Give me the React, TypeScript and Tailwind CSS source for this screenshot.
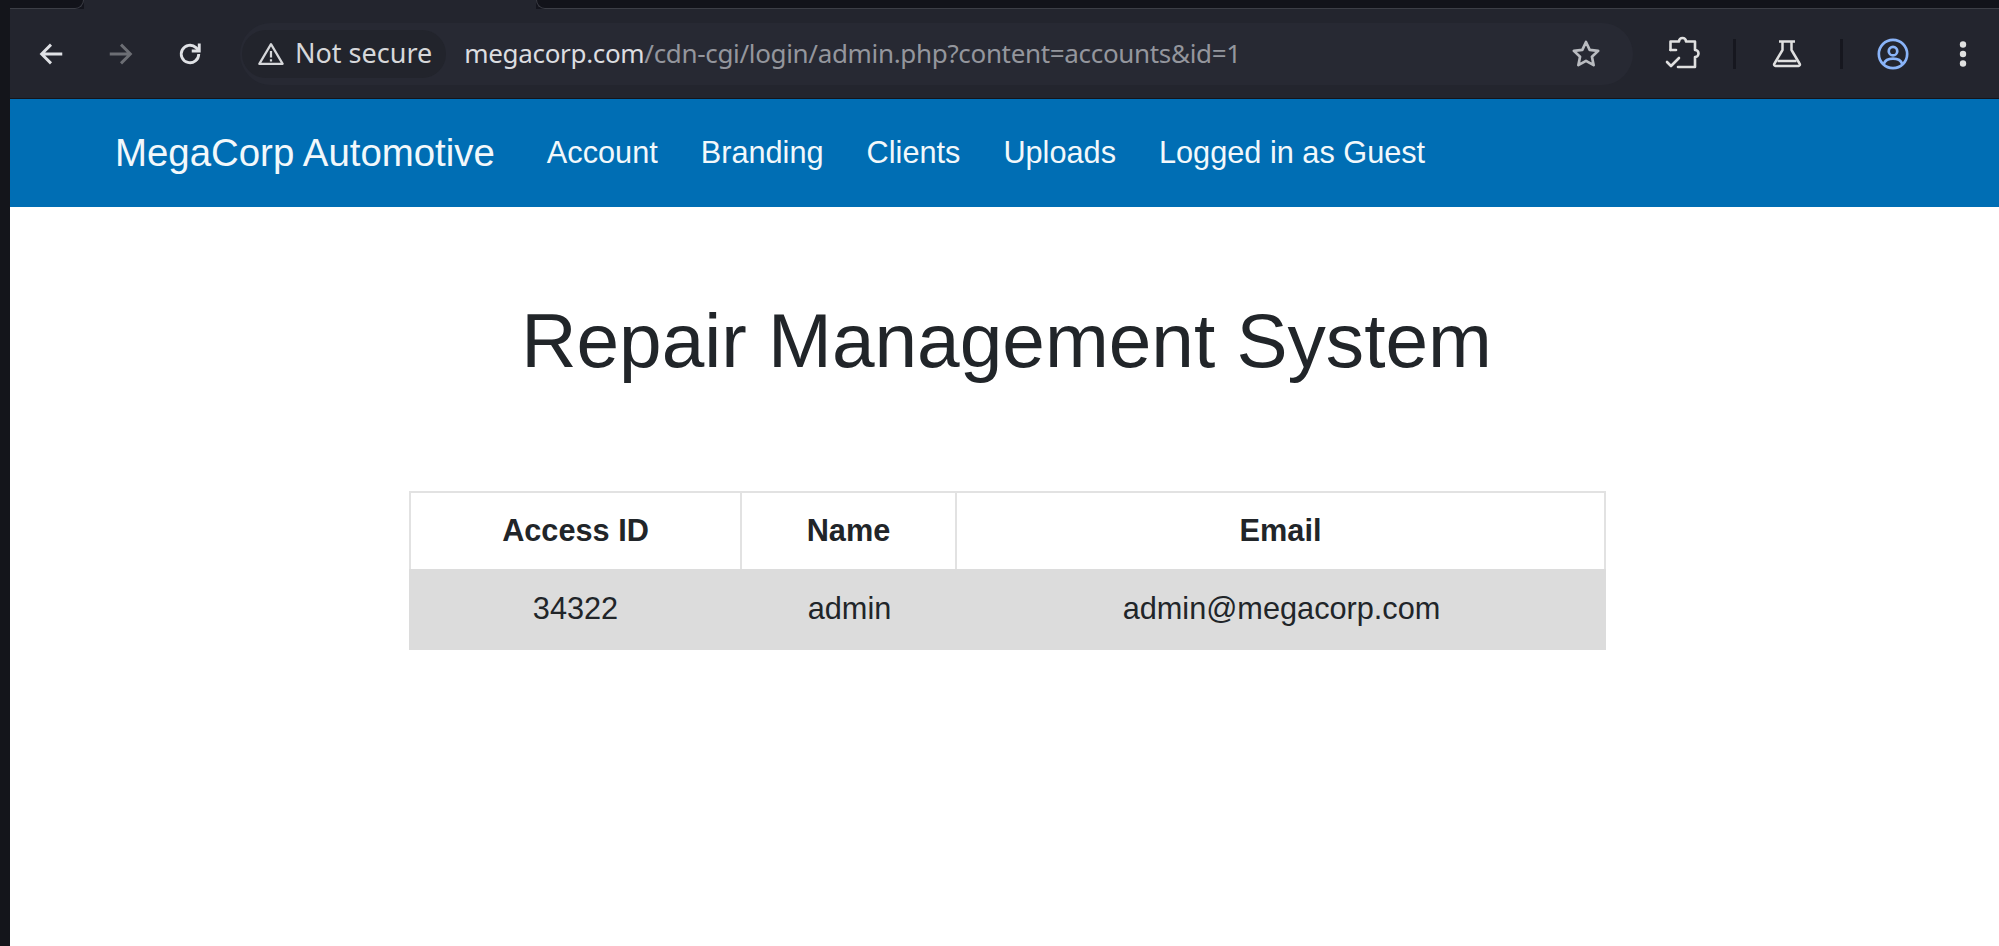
import React from "react";

const Back = ({ c = "#dfe1e5" }: { c?: string }) => (
  <svg width="30" height="30" viewBox="0 0 24 24" fill="none" stroke={c} strokeWidth="2.3">
    <path d="M21 12H4.5M12 4.5L4.5 12l7.5 7.5" />
  </svg>
);

export default function App() {
  return (
    <div className="h-[946px] w-[1999px] overflow-hidden flex bg-[#16171f] font-['Liberation_Sans',sans-serif]">
      <div className="w-[10px] shrink-0 bg-[#14151b]" />
      <div className="flex-1 flex flex-col min-w-0">
        <div className="relative h-[9px] bg-[#14151d]">
          <div className="absolute left-0 top-0 h-[9px] w-[74px] rounded-br-[10px] border-b border-r border-[#3c3e46] bg-[#12131a]" />
          <div className="absolute left-[74px] top-0 h-[9px] w-[452px] bg-[#23252e]" />
          <div className="absolute left-[526px] top-0 h-[9px] w-[1463px] rounded-bl-[10px] border-b border-l border-[#3c3e46] bg-[#12131a]" />
        </div>
        <div className="h-[89px] bg-[#23252e] flex items-center pl-[26px] text-[#d6d7da]">
          <Back />
          <div className="ml-[40px] w-[30px] h-[30px] -scale-x-100"><Back c="#6c6e74" /></div>
          <svg className="ml-[39px]" width="30" height="30" viewBox="0 0 24 24" fill="none" stroke="#dfe1e5" strokeWidth="2.3">
            <path d="M19 12a7 7 0 1 1-2.200-5.100L19 9" />
            <path d="M19.400 3.600V9.600H13.400" />
          </svg>
          <div className="ml-[35px] w-[1393px] h-[62px] rounded-full bg-[#272933] flex items-center pr-[30px] shrink-0">
            <div className="h-[48px] ml-[2px] pl-[15px] pr-[14px] rounded-full bg-[#22242c] flex items-center gap-[10px]">
              <svg width="28" height="28" viewBox="0 0 24 24" fill="none" stroke="#d6d7da" strokeWidth="1.9">
                <path d="M12 3.500L22 20.500H2Z" strokeLinejoin="round" />
                <path d="M12 9.500v5.500M12 16.500v2" />
              </svg>
              <span className="text-[27px] font-['Noto_Sans',sans-serif] whitespace-nowrap">Not secure</span>
            </div>
            <div className="ml-[18px] flex-1 text-[26px] font-['Noto_Sans',sans-serif] tracking-[-0.33px] whitespace-nowrap">
              <span className="text-[#dcdde0]">megacorp.com</span>
              <span className="text-[#94969d]">/cdn-cgi/login/admin.php?content=accounts&amp;id=1</span>
            </div>
            <svg width="34" height="34" viewBox="0 0 24 24" fill="none" stroke="#b9bbc0" strokeWidth="1.9" strokeLinejoin="round">
              <path d="M12 3.500l2.600 5.600 6 .7-4.400 4.100 1.200 6-5.400-3-5.400 3 1.200-6-4.400-4.100 6-.7Z" />
            </svg>
          </div>
          <svg className="ml-[30px]" width="40" height="40" viewBox="0 0 40 40" fill="none" stroke="#e0e0e0" strokeWidth="2.600" strokeLinejoin="round" strokeLinecap="round">
            <path d="M7.500 16V7.500H16a3.500 3.500 0 0 1 7 0H32V16a3.500 3.500 0 0 1 0 7V33H15" />
            <path d="M7.500 16H13" />
            <path d="M4 28l4 4 8-8" />
          </svg>
          <div className="ml-[30px] w-[3px] h-[30px] bg-[#16171f]" />
          <svg className="ml-[36px]" width="30" height="30" viewBox="0 0 30 30" fill="none" stroke="#e0e0e0" strokeWidth="2.500" strokeLinejoin="round">
            <path d="M7 2.500H23M10.500 2.500V11L2.500 24.500a1.500 1.500 0 0 0 1.300 2.500H26.200a1.500 1.500 0 0 0 1.300-2.500L19.500 11V2.500" />
            <path d="M5.500 22H24.500" />
          </svg>
          <div className="ml-[38px] w-[3px] h-[30px] bg-[#16171f]" />
          <svg className="ml-[33px]" width="34" height="34" viewBox="0 0 24 24" fill="none" stroke="#8ab4f8" strokeWidth="1.9">
            <circle cx="12" cy="12" r="10" />
            <circle cx="12" cy="10" r="3" />
            <path d="M5.500 19c1-3 3.500-3.800 6.500-3.800s5.500.8 6.500 3.800" />
          </svg>
          <svg className="ml-[48px]" width="10" height="30" viewBox="0 0 10 30" fill="#e0e0e0">
            <circle cx="5" cy="5.500" r="3.200" />
            <circle cx="5" cy="15" r="3.200" />
            <circle cx="5" cy="24.500" r="3.200" />
          </svg>
        </div>
        <div className="h-px bg-[#14151b]" />
        <nav className="h-[108px] bg-[#006eb4] flex items-center pl-[105px] text-[#f2f8fb]">
          <span className="text-[38.4px] whitespace-nowrap">MegaCorp Automotive</span>
          <div className="ml-[52px] flex gap-[43px] text-[30.7px] whitespace-nowrap">
            <span>Account</span>
            <span>Branding</span>
            <span>Clients</span>
            <span>Uploads</span>
            <span>Logged in as Guest</span>
          </div>
        </nav>
        <main className="flex-1 bg-white text-[#212529] flex flex-col items-center">
          <h1 className="mt-[88px] text-[76.6px] leading-[92px] whitespace-nowrap ml-[4px]">Repair Management System</h1>
          <table className="mt-[104px] w-[1197px] ml-[6px] table-fixed border-separate border-spacing-0 text-[30.7px] text-center">
            <colgroup>
              <col className="w-[333px]" />
              <col className="w-[215px]" />
              <col className="w-[649px]" />
            </colgroup>
            <thead>
              <tr className="h-[78px]">
                <th className="border-t-2 border-l-2 border-r-2 border-[#e2e2e2] font-bold">Access ID</th>
                <th className="border-t-2 border-r-2 border-[#e2e2e2] font-bold">Name</th>
                <th className="border-t-2 border-r-2 border-[#e2e2e2] font-bold">Email</th>
              </tr>
            </thead>
            <tbody>
              <tr className="h-[81px] bg-[#dcdcdc]">
                <td>34322</td>
                <td>admin</td>
                <td>admin@megacorp.com</td>
              </tr>
            </tbody>
          </table>
        </main>
      </div>
    </div>
  );
}
